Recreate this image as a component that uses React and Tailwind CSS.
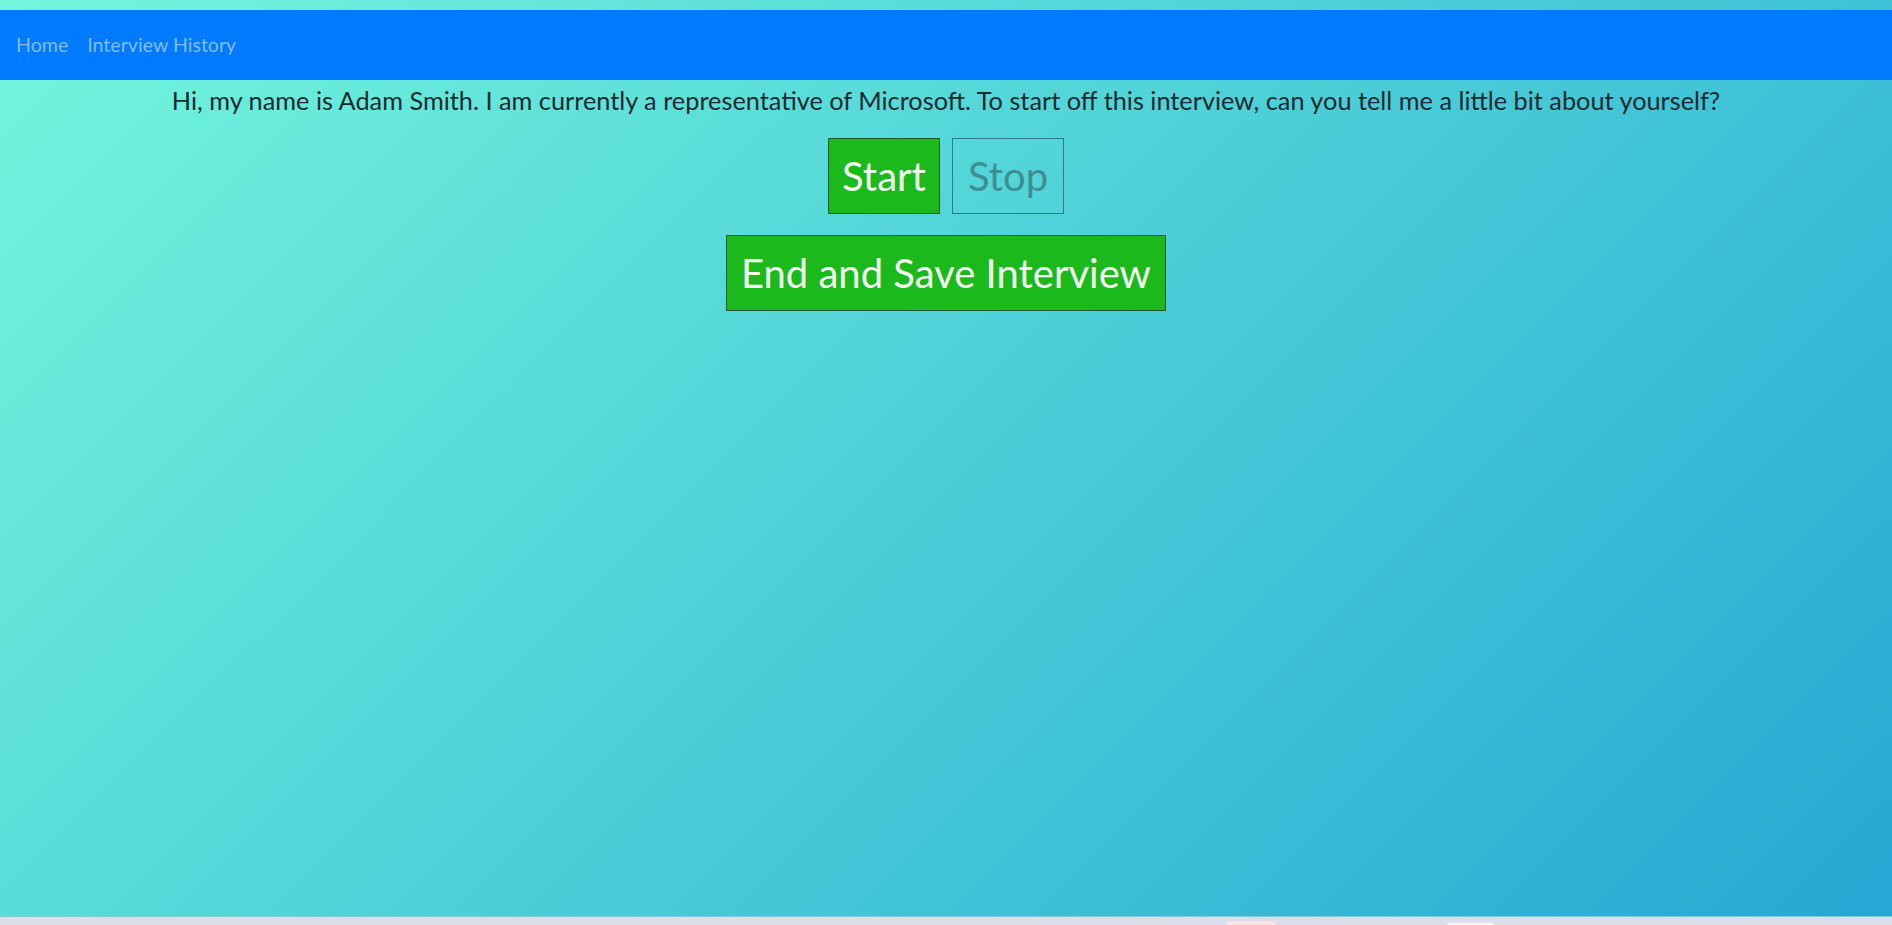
export default function App() {
  return (
    <div className="flex flex-col w-full h-[925px] overflow-hidden" style={{ fontFamily: 'Lato, "Open Sans", sans-serif' }}>
      <div className="h-[916px] pt-[10px] bg-[linear-gradient(135deg,#73f6dc,#26a7d4)] flex flex-col">
        <nav className="h-[70px] bg-[#007bff] flex items-center pl-4 gap-[19px] text-[19.6px] text-[#80bdff]">
          <span>Home</span>
          <span>Interview History</span>
        </nav>
        <div className="flex flex-col items-center">
          <p className="mt-[2px] text-[25.3px] leading-[37px] text-[#1c2b30] text-center">
            Hi, my name is Adam Smith. I am currently a representative of Microsoft. To start off this interview, can you tell me a little bit about yourself?
          </p>
          <div className="flex gap-3 mt-[19px]">
            <button className="w-[112px] h-[76px] bg-[#1bb91b] border border-[#1d5a2a] text-[40px] text-[#f2fff0] flex items-center justify-center">
              Start
            </button>
            <button className="w-[112px] h-[76px] border border-[#2e7e86] text-[40px] text-[#3d8e92] flex items-center justify-center">
              Stop
            </button>
          </div>
          <button className="mt-[21px] w-[440px] h-[76px] bg-[#1bb91b] border border-[#1d5a3a] text-[40px] text-[#f2fff0] flex items-center justify-center">
            End and Save Interview
          </button>
        </div>
      </div>
      <div className="h-[9px] bg-[#dcdfea] border-t border-[#86c9d2] flex items-end">
        <div className="ml-[1227px] w-[48px] h-[4px] rounded-t-[3px] bg-[#fde3e8]"></div>
        <div className="ml-[172px] w-[47px] h-[2px] rounded-t-[3px] bg-[#f3f5f8]"></div>
      </div>
    </div>
  );
}
